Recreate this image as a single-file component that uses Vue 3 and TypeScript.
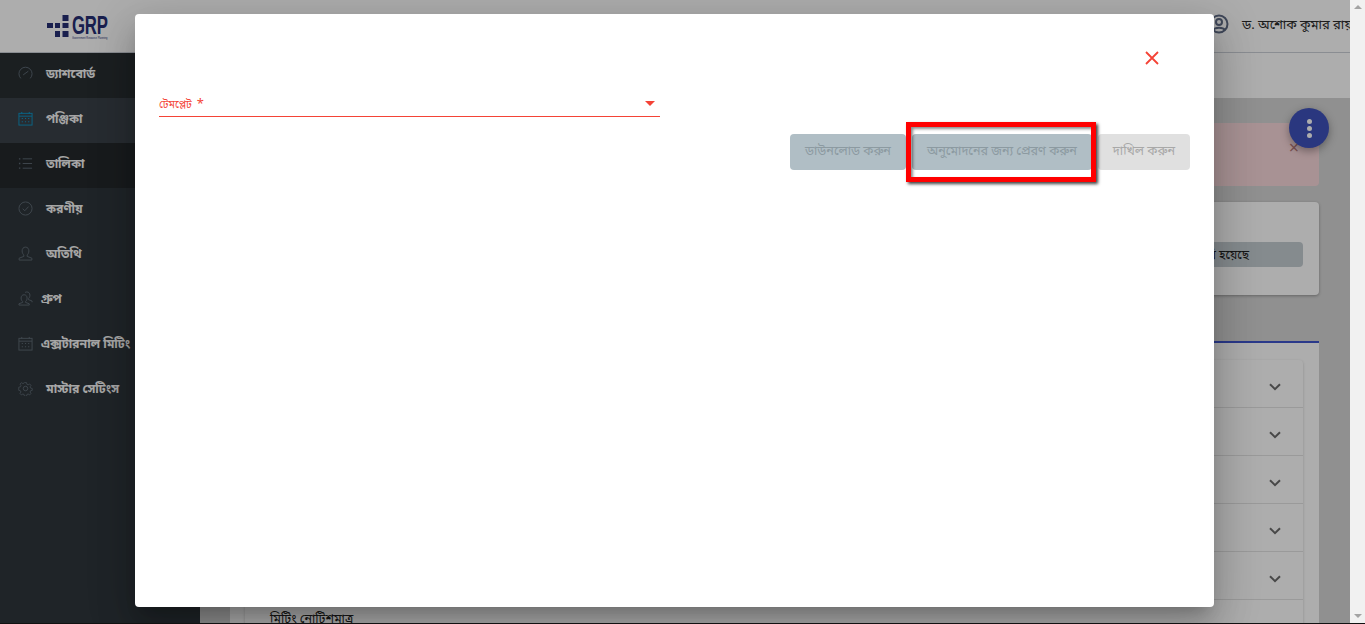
<script setup lang="ts">
interface NavItem { label: string; kind: string; tight?: boolean; tone?: string }
const nav: NavItem[] = [
  { label: 'ড্যাশবোর্ড', kind: 'gauge', tone: 'dark' },
  { label: 'পঞ্জিকা', kind: 'cal', tone: 'active' },
  { label: 'তালিকা', kind: 'list', tone: 'darker' },
  { label: 'করণীয়', kind: 'check' },
  { label: 'অতিথি', kind: 'user' },
  { label: 'গ্রুপ', kind: 'group', tight: true },
  { label: 'এক্সটারনাল মিটিং', kind: 'cal2', tight: true },
  { label: 'মাস্টার সেটিংস', kind: 'gear' }
]
const rows = [1, 2, 3, 4, 5]
</script>

<template>
  <div class="root">
    <div class="page">
      <header class="topbar">
        <div class="logo">
          <svg class="logo-mark" width="22" height="22" viewBox="0 0 22 22">
            <rect x="0" y="8" width="6" height="5" />
            <rect x="8" y="8" width="5" height="5" />
            <rect x="15.500" y="8" width="6" height="5" />
            <rect x="15.500" y="0" width="6" height="6" />
            <rect x="8" y="16" width="5" height="6" />
            <rect x="15.500" y="16" width="6" height="6" />
          </svg>
          <div class="logo-text">
            <span class="grp">GRP</span>
            <span class="grp-sub">Government Resource Planning</span>
          </div>
        </div>
        <div class="account">
          <svg width="20" height="20" viewBox="0 0 20 20" fill="none" stroke="#5f6b85" stroke-width="2">
            <circle cx="10" cy="10" r="8.500" />
            <circle cx="10" cy="8" r="3" />
            <path d="M4 16c2-3 10-3 12 0" />
          </svg>
          <span>ড. অশোক কুমার রায়</span>
        </div>
      </header>

      <div class="body">
        <aside class="sidebar">
          <div v-for="item in nav" :key="item.label" class="nav" :class="item.tone">
            <svg class="nav-icon" width="15" height="15" viewBox="0 0 16 16" fill="none" stroke="currentColor" stroke-width="1">
              <template v-if="item.kind === 'gauge'">
                <path d="M3 13.200A7 7 0 1 1 13 13.200" />
                <path d="M5.500 9.500 11 5.500" />
              </template>
              <template v-else-if="item.kind === 'cal' || item.kind === 'cal2'">
                <rect x="1" y="2.500" width="14" height="12.500" />
                <path d="M1 5.500h14M4 1v2M12 1v2" />
                <path d="M4 8h1.200M7.400 8h1.200M10.800 8h1.200M4 11.500h1.200M7.400 11.500h1.200M10.800 11.500h1.200" stroke-width="1.200" />
              </template>
              <template v-else-if="item.kind === 'list'">
                <path d="M5 3h10M5 8h10M5 13h10" />
                <path d="M1 3h1.500M1 8h1.500M1 13h1.500" stroke-width="1.400" />
              </template>
              <template v-else-if="item.kind === 'check'">
                <circle cx="8" cy="8" r="7" />
                <path d="M5 8.200 7.200 10.400 11.200 6" />
              </template>
              <template v-else-if="item.kind === 'user'">
                <path d="M8 1.200c-2.300 0-3.600 1.700-3.600 4 0 2 .8 3.500 1.800 4.300v1.600L1.200 13v2h13.600v-2l-5-1.900V9.500c1-.8 1.800-2.300 1.800-4.300 0-2.300-1.300-4-3.600-4Z" />
              </template>
              <template v-else-if="item.kind === 'group'">
                <path d="M6.500 4c-2 0-3.200 1.500-3.200 3.500 0 1.700.7 3 1.600 3.700v1L1 13.600V15h11v-1.400l-3.900-1.400v-1c.9-.7 1.600-2 1.600-3.700C9.700 5.500 8.500 4 6.500 4Z" />
                <path d="M7.500 1.600c.6-.4 1.300-.6 2-.6 2 0 3.200 1.500 3.200 3.500 0 1.700-.7 3-1.600 3.700v1l3.900 1.400V12" />
              </template>
              <template v-else>
                <circle cx="8" cy="8" r="2.400" />
                <path d="M6.800 1h2.400l.4 2 1.500.7 1.800-1.100 1.600 1.700-1.100 1.700.6 1.500 2 .5v2.200l-2 .5-.6 1.500 1.100 1.700-1.600 1.700-1.800-1.100-1.500.7-.4 2H6.800l-.4-2-1.500-.7-1.800 1.100-1.600-1.700 1.100-1.700-.6-1.500-2-.5V6.500l2-.5.6-1.500-1.100-1.700 1.600-1.700 1.800 1.100 1.500-.7Z" transform="translate(.8 .8) scale(.9)" />
              </template>
            </svg>
            <span class="nav-label" :class="{ tight: item.tight }">{{ item.label }}</span>
          </div>
        </aside>

        <main class="main">
          <div class="subbar"></div>
          <div class="content">
            <div class="alert">
              <span class="alert-x">×</span>
            </div>
            <div class="status-card">
              <div class="pill"><span>তৈরি হয়েছে</span></div>
            </div>
            <section class="panel">
              <div class="accordion">
                <div v-for="r in rows" :key="r" class="acc-row">
                  <svg width="12" height="8" viewBox="0 0 12 8" fill="none" stroke="#6b6b6b" stroke-width="2">
                    <path d="M1 1.200 6 6.200 11 1.200" />
                  </svg>
                </div>
                <div class="acc-row last"><span>মিটিং নোটিশমাত্র</span></div>
              </div>
            </section>
          </div>
        </main>
      </div>

      <button class="fab" type="button" aria-label="menu"><i></i><i></i><i></i></button>

      <div class="scrim"></div>

      <div class="dialog">
        <div class="dialog-head">
          <svg width="16" height="16" viewBox="0 0 16 16" stroke="#f44336" stroke-width="1.800" fill="none">
            <path d="M2 2 14 14M14 2 2 14" />
          </svg>
        </div>
        <div class="select">
          <span class="select-label">টেমপ্লেট<em>*</em></span>
          <span class="caret"></span>
        </div>
        <div class="actions">
          <button class="btn slate" type="button">ডাউনলোড করুন</button>
          <button class="btn slate" type="button">অনুমোদনের জন্য প্রেরণ করুন</button>
          <button class="btn grey" type="button">দাখিল করুন</button>
          <div class="highlight"></div>
        </div>
      </div>
    </div>

    <div class="scrollbar">
      <span class="arrow up"></span>
      <span class="arrow down"></span>
    </div>
    <div class="edge"></div>
  </div>
</template>

<style>
html, body { margin: 0; overflow: hidden; }
</style>

<style scoped>
.root {
  position: relative;
  display: flex;
  width: 1365px;
  height: 624px;
  overflow: hidden;
  font-family: "Noto Sans", "Liberation Sans", "Noto Sans Bengali", "Lohit Bengali", FreeSans, sans-serif;
}
.page {
  position: relative;
  flex: 1;
  min-width: 0;
  display: flex;
  flex-direction: column;
  overflow: hidden;
  background: #d4d4d4;
}
.topbar {
  flex: none;
  height: 52px;
  display: flex;
  align-items: center;
  justify-content: space-between;
  background: #fff;
  border-bottom: 1px solid #ccd0d8;
}
.logo { display: flex; align-items: flex-start; margin-left: 47px; margin-top: 2px; }
.logo-mark { fill: #262e74; }
.logo-text { display: flex; flex-direction: column; margin-left: 3px; width: 36px; }
.grp {
  font: 700 25px/20px "Liberation Sans", sans-serif;
  color: #262e74;
  transform: scaleX(.67);
  transform-origin: left;
  letter-spacing: -.3px;
}
.grp-sub {
  font: 400 4px/5px "Liberation Sans", sans-serif;
  color: #262e74;
  white-space: nowrap;
  transform: scaleX(.62);
  transform-origin: left;
}
.account {
  display: flex;
  align-items: center;
  gap: 13px;
  width: 141px;
  margin-bottom: 4px;
  white-space: nowrap;
  overflow: hidden;
  font-size: 13px;
  color: #2c2c2c;
}
.account svg { flex: none; }
.body { flex: 1; min-height: 0; display: flex; }
.sidebar { flex: none; width: 200px; background: #2f363b; }
.nav {
  height: 45px;
  box-sizing: border-box;
  padding: 0 0 4px 18px;
  display: flex;
  align-items: center;
  color: #5e6a74;
}
.nav.dark { background: #282e32; }
.nav.active { background: #3a4249; color: #0e94c6; }
.nav.darker { background: #24282c; }
.nav-icon { flex: none; }
.nav-label {
  margin-left: 13px;
  font-size: 12.3px;
  font-weight: 700;
  color: #f5f5f5;
  white-space: nowrap;
}
.nav-label.tight { margin-left: 8px; }
.main { flex: 1; min-width: 0; display: flex; flex-direction: column; }
.subbar { flex: none; height: 45px; background: #fff; }
.content {
  flex: 1;
  min-height: 0;
  padding: 25px 31px 0 30px;
  display: flex;
  flex-direction: column;
  overflow: hidden;
}
.alert {
  flex: none;
  height: 63px;
  position: relative;
  background: #f8d7da;
  border-radius: 4px;
}
.alert-x {
  position: absolute;
  right: 20px;
  top: 12px;
  font-size: 18px;
  line-height: 24px;
  color: #b37676;
}
.status-card {
  flex: none;
  margin-top: 16px;
  height: 93px;
  padding: 40px 16px 0 16px;
  box-sizing: border-box;
  background: #fff;
  border-radius: 4px;
  box-shadow: 0 1px 3px rgba(0, 0, 0, .3);
}
.pill {
  height: 25px;
  display: flex;
  align-items: center;
  justify-content: flex-end;
  padding-right: 54px;
  font-size: 12px;
  color: #222;
  background: #c5cdd2;
  border-radius: 4px;
}
.panel {
  flex: none;
  margin-top: 46px;
  border-top: 2px solid #3f55cc;
  padding: 17px 16px 0 15px;
  background: #fff;
}
.accordion { box-shadow: 0 1px 3px rgba(0, 0, 0, .2); border-radius: 4px; }
.acc-row {
  height: 48px;
  box-sizing: border-box;
  border-bottom: 1px solid #e4e4e4;
  display: flex;
  align-items: center;
  justify-content: flex-end;
  padding: 6px 22px 0 0;
}
.acc-row.last {
  justify-content: flex-start;
  padding: 10px 0 0 25px;
  height: 50px;
  align-items: flex-start;
  font-size: 12.5px;
  color: #222;
}
.fab {
  position: absolute;
  left: 1289px;
  top: 108px;
  width: 40px;
  height: 40px;
  padding: 0;
  border: 0;
  border-radius: 50%;
  background: #3e51bc;
  display: flex;
  flex-direction: column;
  align-items: center;
  justify-content: center;
  gap: 2px;
  box-shadow: 0 3px 8px rgba(0, 0, 0, .35);
}
.fab i { display: block; width: 5px; height: 5px; border-radius: 50%; background: #fff; }
.scrim { position: absolute; inset: 0; background: rgba(0, 0, 0, .32); }
.dialog {
  position: absolute;
  left: 135px;
  top: 14px;
  width: 1079px;
  height: 593px;
  box-sizing: border-box;
  padding: 36px 24px 0;
  background: #fff;
  border-radius: 4px;
  box-shadow: 0 11px 15px -7px rgba(0, 0, 0, .2), 0 24px 38px 3px rgba(0, 0, 0, .14), 0 9px 46px 8px rgba(0, 0, 0, .12);
}
.dialog-head { height: 16px; display: flex; justify-content: flex-end; padding-right: 30px; }
.select {
  position: relative;
  margin-top: 28px;
  width: 501px;
  height: 22px;
  border-bottom: 1px solid #f44336;
  display: flex;
  align-items: center;
}
.select-label { font-size: 10.500px; color: #f44336; margin-top: -4px; }
.select-label em { font-style: normal; font-size: 13px; margin-left: 5px; }
.caret {
  position: absolute;
  right: 5px;
  top: 7px;
  border-left: 5px solid transparent;
  border-right: 5px solid transparent;
  border-top: 5px solid #f44336;
}
.actions {
  position: relative;
  display: flex;
  justify-content: flex-end;
  gap: 6px;
  margin-top: 17px;
}
.btn {
  height: 36px;
  padding: 0 15px 3px;
  border: 0;
  border-radius: 4px;
  font: inherit;
  font-size: 12.6px;
  white-space: nowrap;
}
.slate { background: #b0bec5; color: #8c9aa1; }
.grey { background: #e0e0e0; color: #a8a8a8; }
.highlight {
  position: absolute;
  left: 747px;
  top: -12px;
  width: 190px;
  height: 60px;
  box-sizing: border-box;
  border: 5px solid #f00;
  box-shadow: 2px 2px 3px rgba(0, 0, 0, .75), inset 2px 2px 3px rgba(0, 0, 0, .45);
  pointer-events: none;
}
.scrollbar {
  flex: none;
  width: 15px;
  background: #f1f1f1;
  display: flex;
  flex-direction: column;
  justify-content: space-between;
  align-items: center;
  padding: 5px 0 6px;
  box-sizing: border-box;
}
.arrow { width: 0; height: 0; border-left: 4px solid transparent; border-right: 4px solid transparent; }
.up { border-bottom: 4px solid #a3a3a3; }
.down { border-top: 4px solid #a3a3a3; }
.edge { position: absolute; left: 0; right: 0; bottom: 0; height: 1px; background: #111; }
</style>
